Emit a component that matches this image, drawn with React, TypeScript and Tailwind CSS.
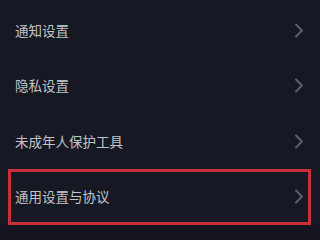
const items = ["通知设置", "隐私设置", "未成年人保护工具", "通用设置与协议"];

const Chevron = () => (
  <svg width="10" height="15" viewBox="0 0 10 15" fill="none">
    <path
      d="M2 1.5 L8 7.5 L2 13.5"
      stroke="#5c5e68"
      strokeWidth="2"
      strokeLinecap="round"
      strokeLinejoin="round"
    />
  </svg>
);

export default function App() {
  return (
    <div
      className="flex h-[240px] w-[320px] flex-col overflow-hidden bg-[#161823] pt-[2.5px]"
      style={{ fontFamily: '"Noto Sans CJK SC", "Noto Sans", sans-serif' }}
    >
      {items.map((label, i) => (
        <div key={label} className="h-[55.5px] shrink-0 pl-[7.5px] pr-[9.5px]">
          <div
            className={
              i === 3
                ? "flex h-full items-center justify-between border-[3px] border-[#c92f3a] pl-[4.5px] pr-[3.5px]"
                : "flex h-full items-center justify-between border-[3px] border-transparent pl-[4.5px] pr-[3.5px]"
            }
          >
            <span className="text-[13.5px] leading-none text-[#c3c4c9]">
              {label}
            </span>
            <Chevron />
          </div>
        </div>
      ))}
      <div className="flex-1 bg-[#13141d]" />
    </div>
  );
}
